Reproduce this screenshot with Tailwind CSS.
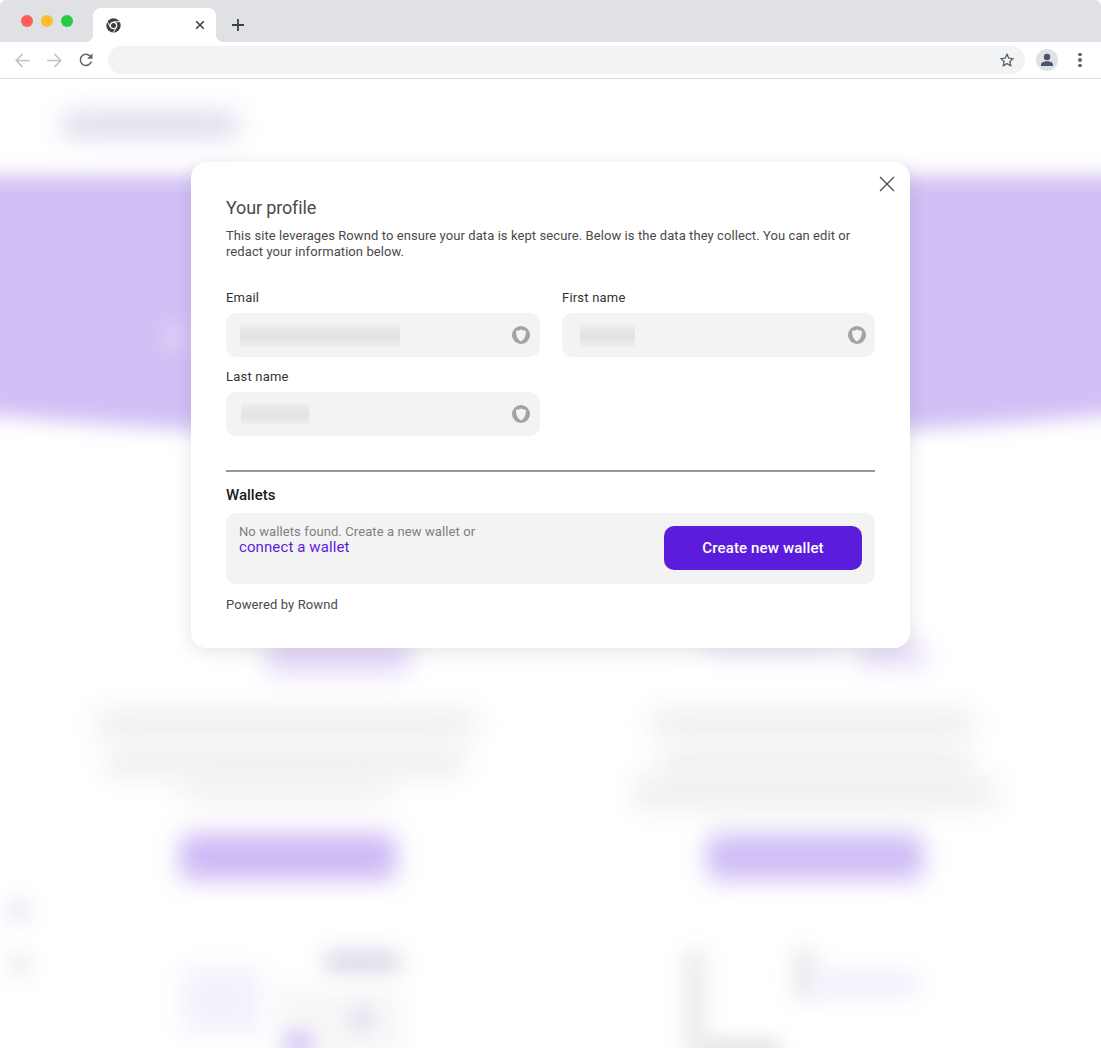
<!DOCTYPE html>
<html lang="en">

<head>
    <meta charset="UTF-8">
    <meta name="viewport" content="width=device-width, initial-scale=1.0">
    <title>Your profile</title>
    <script src="https://cdn.jsdelivr.net/npm/@tailwindcss/browser@4"></script>
</head>

<body class="bg-white font-[Roboto,sans-serif]">
    <div class="relative w-[1101px] h-[1048px] overflow-hidden bg-white">

        <!-- browser chrome -->
        <header class="relative z-20">
            <div class="h-[42px] bg-[#dfe1e5] rounded-t-[6px] flex items-end">
                <div class="flex gap-[8px] w-[93px] h-full items-center pl-[21px]">
                    <span class="w-[12px] h-[12px] rounded-full bg-[#ff5f57]"></span>
                    <span class="w-[12px] h-[12px] rounded-full bg-[#ffbd2e]"></span>
                    <span class="w-[12px] h-[12px] rounded-full bg-[#28ca42]"></span>
                </div>
                <div class="relative w-[123px] h-[34px] bg-white rounded-t-[8px] flex items-center justify-between pl-[13px] pr-[10px]">
                    <span class="absolute left-[-8px] bottom-0 w-[8px] h-[8px] bg-[radial-gradient(circle_at_0_0,#dfe1e5_8px,#fff_8.500px)]"></span>
                    <span class="absolute right-[-8px] bottom-0 w-[8px] h-[8px] bg-[radial-gradient(circle_at_100%_0,#dfe1e5_8px,#fff_8.500px)]"></span>
                    <svg width="15" height="15" viewBox="0 0 24 24">
                        <circle cx="12" cy="12" r="11.500" fill="#3c4043" />
                        <circle cx="12" cy="12" r="6" fill="#fff" />
                        <circle cx="12" cy="12" r="4" fill="#3c4043" />
                        <path d="M12 6h10M7 15L2.500 6.500M16.500 15L11.500 23.500" stroke="#fff" stroke-width="1.500" fill="none" />
                    </svg>
                    <svg width="12" height="12" viewBox="0 0 12 12">
                        <path d="M2.200 2.200l7.600 7.600M9.800 2.200l-7.600 7.600" stroke="#3c4043" stroke-width="1.600" fill="none" />
                    </svg>
                </div>
                <div class="w-[44px] h-[34px] flex items-center justify-center">
                    <svg width="14" height="14" viewBox="0 0 14 14">
                        <path d="M7 1v12M1 7h12" stroke="#3c4043" stroke-width="1.800" fill="none" />
                    </svg>
                </div>
            </div>
            <div class="h-[37px] bg-white border-b border-[#dadce0] flex items-center">
                <div class="w-[108px] flex items-center pl-[14px] gap-[15px]">
                    <svg width="17" height="17" viewBox="0 0 16 16">
                        <path d="M15 8H2M8 2L2 8l6 6" stroke="#bdc1c6" stroke-width="1.400" fill="none" />
                    </svg>
                    <svg width="17" height="17" viewBox="0 0 16 16">
                        <path d="M1 8h13M8 2l6 6-6 6" stroke="#bdc1c6" stroke-width="1.400" fill="none" />
                    </svg>
                    <svg width="16" height="16" viewBox="0 0 16 16">
                        <path d="M13.300 9.500A5.600 5.600 0 1 1 12 4" stroke="#5f6368" stroke-width="1.500" fill="none" />
                        <path d="M14.500 1.200v5.600H9z" fill="#5f6368" />
                    </svg>
                </div>
                <div class="w-[917px] h-[28px] rounded-full bg-[#f1f3f4] flex items-center justify-end pr-[10px]">
                    <svg width="16" height="16" viewBox="0 0 24 24">
                        <path d="M12 3.200l2.700 6.100 6.600.6-5 4.400 1.500 6.500L12 17.400l-5.800 3.400 1.500-6.500-5-4.400 6.600-.6z" stroke="#5f6368" stroke-width="2" fill="none" stroke-linejoin="round" />
                    </svg>
                </div>
                <div class="flex items-center pl-[11px]">
                    <div class="w-[22px] h-[22px] rounded-full bg-[#dee1e6] flex items-center justify-center">
                        <svg width="14" height="14" viewBox="0 0 14 14">
                            <circle cx="7" cy="4" r="3.200" fill="#4a5568" />
                            <path d="M1 13v-1.500C1 9.300 4.500 8.300 7 8.300s6 1 6 3.200V13z" fill="#4a5568" />
                        </svg>
                    </div>
                    <div class="flex flex-col gap-[2px] ml-[20px]">
                        <span class="w-[3.500px] h-[3.500px] rounded-full bg-[#5f6368]"></span>
                        <span class="w-[3.500px] h-[3.500px] rounded-full bg-[#5f6368]"></span>
                        <span class="w-[3.500px] h-[3.500px] rounded-full bg-[#5f6368]"></span>
                    </div>
                </div>
            </div>
        </header>

        <!-- blurred page behind the dialog -->
        <div class="absolute left-0 top-0 w-[1101px] h-[1048px] overflow-hidden">
            <div class="absolute left-[60px] top-[112px] w-[180px] h-[26px] rounded-full bg-[#dfdbec] blur-[12px]"></div>

            <svg class="absolute left-[-60px] top-0 blur-[10px]" width="1221" height="500" viewBox="-60 0 1221 500">
                <path d="M-60 176H1161V410Q550 470 -60 410Z" fill="#d1bff5" />
            </svg>
            <div class="absolute left-[162px] top-[322px] w-[28px] h-[30px] rounded-full bg-[#dccff7] blur-[10px]"></div>

            <div class="absolute left-[266px] top-[636px] w-[144px] h-[38px] rounded-lg bg-[#e4d8fa] blur-[12px]"></div>
            <div class="absolute left-[704px] top-[636px] w-[134px] h-[20px] rounded-lg bg-[#efe9fa] blur-[12px]"></div>
            <div class="absolute left-[856px] top-[640px] w-[70px] h-[28px] rounded-lg bg-[#e9dffa] blur-[12px]"></div>

            <div class="absolute left-[94px] top-[714px] w-[384px] h-[18px] rounded-full bg-[#e6e6e6] blur-[14px]"></div>
            <div class="absolute left-[104px] top-[750px] w-[362px] h-[24px] rounded-full bg-[#ebebeb] blur-[14px]"></div>
            <div class="absolute left-[180px] top-[778px] w-[210px] h-[22px] rounded-full bg-[#eeeeee] blur-[14px]"></div>
            <div class="absolute left-[180px] top-[834px] w-[216px] h-[46px] rounded-lg bg-[#cdb8f6] blur-[12px]"></div>

            <div class="absolute left-[649px] top-[714px] w-[327px] h-[18px] rounded-full bg-[#e6e6e6] blur-[14px]"></div>
            <div class="absolute left-[659px] top-[750px] w-[312px] h-[24px] rounded-full bg-[#ececec] blur-[14px]"></div>
            <div class="absolute left-[632px] top-[780px] w-[366px] h-[26px] rounded-full bg-[#ebebeb] blur-[14px]"></div>
            <div class="absolute left-[707px] top-[834px] w-[216px] h-[46px] rounded-lg bg-[#cfbcf6] blur-[12px]"></div>

            <div class="absolute left-[6px] top-[898px] w-[26px] h-[26px] rounded-full bg-[#ece9f4] blur-[10px]"></div>
            <div class="absolute left-[6px] top-[952px] w-[26px] h-[26px] rounded-full bg-[#efeef3] blur-[10px]"></div>

            <div class="absolute left-[182px] top-[967px] w-[80px] h-[66px] bg-[#f5f1fc] blur-[12px]"></div>
            <div class="absolute left-[324px] top-[952px] w-[76px] h-[20px] rounded bg-[#d8d2e4] blur-[11px]"></div>
            <div class="absolute left-[274px] top-[989px] w-[127px] h-[67px] bg-[#f7f7f7] blur-[12px]"></div>
            <div class="absolute left-[350px] top-[1008px] w-[22px] h-[22px] rounded bg-[#e2daf1] blur-[10px]"></div>
            <div class="absolute left-[285px] top-[1030px] w-[28px] h-[30px] rounded bg-[#dccdf9] blur-[9px]"></div>

            <div class="absolute left-[686px] top-[950px] w-[18px] h-[106px] bg-[#e6e6e6] blur-[11px]"></div>
            <div class="absolute left-[795px] top-[950px] w-[20px] h-[50px] bg-[#e6e5ea] blur-[11px]"></div>
            <div class="absolute left-[814px] top-[972px] w-[104px] h-[24px] bg-[#f2edfc] blur-[11px]"></div>
            <div class="absolute left-[704px] top-[1042px] w-[76px] h-[16px] bg-[#d8d8d8] blur-[10px]"></div>
        </div>

        <!-- profile dialog -->
        <section class="absolute z-10 left-[191px] top-[162px] w-[719px] h-[486px] bg-white rounded-[16px] shadow-[0_4px_20px_rgba(0,0,0,0.1)] px-[35px] pt-[35px] text-[#333]">
            <button class="absolute right-[15px] top-[14px]">
                <svg width="16" height="16" viewBox="0 0 16 16">
                    <path d="M1 1l14 14M15 1L1 15" stroke="#444" stroke-width="1.200" fill="none" />
                </svg>
            </button>

            <h2 class="text-[18px] leading-[22px] tracking-[-0.15px] text-[#4a4a4a]">Your profile</h2>
            <p class="mt-[9px] text-[13px] leading-[16px] text-[#4a4a4a] tracking-[0.08px]">This site leverages Rownd to ensure your data is kept secure. Below is the data they collect. You can edit or redact your information below.</p>

            <div class="grid grid-cols-[314px_313px] gap-x-[22px] gap-y-[12px] mt-[30px]">
                <div>
                    <label class="block text-[13px] leading-[16px] text-[#333] tracking-[0.2px]">Email</label>
                    <div class="mt-[7px] h-[44px] rounded-[10px] bg-[#f3f3f3] flex items-center justify-between pl-[14px] pr-[10px]">
                        <div class="w-[160px] h-[23px] overflow-hidden">
                            <div class="w-[180px] h-[13px] mt-[5px] ml-[-10px] bg-[#dedede] blur-[6px]"></div>
                        </div>
                        <svg width="18" height="18" viewBox="0 0 18 18">
                            <circle cx="9" cy="9" r="9" fill="#a3a3a3" />
                            <path d="M9 3.500C7.600 4.500 5.800 4.800 4 4.800c0 4.600 1.100 8.500 5 10.700 3.900-2.200 5-6.100 5-10.700C12.200 4.800 10.400 4.500 9 3.500z" fill="#f3f3f3" />
                        </svg>
                    </div>
                </div>
                <div>
                    <label class="block text-[13px] leading-[16px] text-[#333] tracking-[0.2px]">First name</label>
                    <div class="mt-[7px] h-[44px] rounded-[10px] bg-[#f3f3f3] flex items-center justify-between pl-[18px] pr-[9px]">
                        <div class="w-[55px] h-[23px] overflow-hidden">
                            <div class="w-[75px] h-[13px] mt-[5px] ml-[-10px] bg-[#dedede] blur-[6px]"></div>
                        </div>
                        <svg width="18" height="18" viewBox="0 0 18 18">
                            <circle cx="9" cy="9" r="9" fill="#a3a3a3" />
                            <path d="M9 3.500C7.600 4.500 5.800 4.800 4 4.800c0 4.600 1.100 8.500 5 10.700 3.900-2.200 5-6.100 5-10.700C12.200 4.800 10.400 4.500 9 3.500z" fill="#f3f3f3" />
                        </svg>
                    </div>
                </div>
                <div>
                    <label class="block text-[13px] leading-[16px] text-[#333] tracking-[0.2px]">Last name</label>
                    <div class="mt-[7px] h-[44px] rounded-[10px] bg-[#f3f3f3] flex items-center justify-between pl-[15px] pr-[10px]">
                        <div class="w-[68px] h-[20px] overflow-hidden">
                            <div class="w-[88px] h-[12px] mt-[4px] ml-[-10px] bg-[#dedede] blur-[6px]"></div>
                        </div>
                        <svg width="18" height="18" viewBox="0 0 18 18">
                            <circle cx="9" cy="9" r="9" fill="#a3a3a3" />
                            <path d="M9 3.500C7.600 4.500 5.800 4.800 4 4.800c0 4.600 1.100 8.500 5 10.700 3.900-2.200 5-6.100 5-10.700C12.200 4.800 10.400 4.500 9 3.500z" fill="#f3f3f3" />
                        </svg>
                    </div>
                </div>
            </div>

            <hr class="mt-[34px] h-[2px] border-0 bg-[#979797]">

            <h3 class="mt-[14px] text-[15px] leading-[18px] font-medium text-[#1a1a1a]">Wallets</h3>

            <div class="mt-[9px] h-[71px] rounded-[10px] bg-[#f3f3f3] flex justify-between pl-[13px] pr-[13px] pt-[13px]">
                <div class="-mt-[1px]">
                    <p class="text-[13px] leading-[13px] tracking-[0.1px] text-[#808080]">No wallets found. Create a new wallet or</p>
                    <a class="block mt-[2px] text-[15px] leading-[15px] tracking-[0.1px] text-[#5b1ddb]">connect a wallet</a>
                </div>
                <button class="w-[198px] h-[44px] rounded-[10px] bg-[#5b1ddb] text-white text-[15px] tracking-[0.15px] font-medium">Create new wallet</button>
            </div>

            <p class="mt-[13px] text-[13px] leading-[16px] tracking-[0.1px] text-[#4a4a4a]">Powered by Rownd</p>
        </section>
    </div>
</body>

</html>
